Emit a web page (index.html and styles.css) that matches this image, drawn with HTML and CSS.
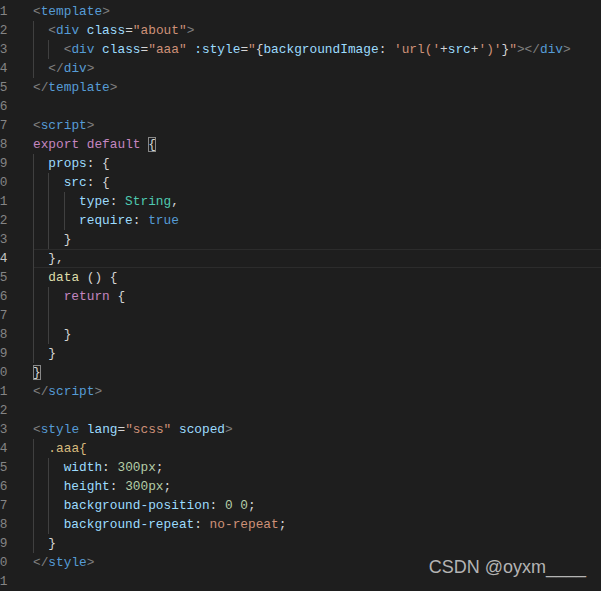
FILE: index.html
```html
<!DOCTYPE html>
<html lang="en">
<head>
  <meta charset="UTF-8" />
  <title>About.vue</title>
  <link rel="stylesheet" href="styles.css">
</head>
<body>

  <!-- editor -->
  <div class="editor">
    <div class="line"><span class="ln">1</span><div class="code"><span class="p">&lt;</span><span class="t">template</span><span class="p">&gt;</span></div></div>
    <div class="line"><span class="ln">2</span><div class="code"><span class="ind"></span><span class="p">&lt;</span><span class="t">div</span> <span class="a">class</span>=<span class="s">"about"</span><span class="p">&gt;</span></div></div>
    <div class="line"><span class="ln">3</span><div class="code"><span class="ind"></span><span class="ind"></span><span class="p">&lt;</span><span class="t">div</span> <span class="a">class</span>=<span class="s">"aaa"</span> <span class="a">:style</span>=<span class="s">"</span>{<span class="a">backgroundImage</span>: <span class="s">'url('</span>+<span class="a">src</span>+<span class="s">')'</span>}<span class="s">"</span><span class="p">&gt;&lt;/</span><span class="t">div</span><span class="p">&gt;</span></div></div>
    <div class="line"><span class="ln">4</span><div class="code"><span class="ind"></span><span class="p">&lt;/</span><span class="t">div</span><span class="p">&gt;</span></div></div>
    <div class="line"><span class="ln">5</span><div class="code"><span class="p">&lt;/</span><span class="t">template</span><span class="p">&gt;</span></div></div>
    <div class="line"><span class="ln">6</span><div class="code"></div></div>
    <div class="line"><span class="ln">7</span><div class="code"><span class="p">&lt;</span><span class="t">script</span><span class="p">&gt;</span></div></div>
    <div class="line"><span class="ln">8</span><div class="code"><span class="k">export</span> <span class="k">default</span> <span class="match">{</span></div></div>
    <div class="line"><span class="ln">9</span><div class="code"><span class="ind"></span><span class="a">props</span>: {</div></div>
    <div class="line"><span class="ln">10</span><div class="code"><span class="ind"></span><span class="ind"></span><span class="a">src</span>: {</div></div>
    <div class="line"><span class="ln">11</span><div class="code"><span class="ind"></span><span class="ind"></span><span class="ind"></span><span class="a">type</span>: <span class="c">String</span>,</div></div>
    <div class="line"><span class="ln">12</span><div class="code"><span class="ind"></span><span class="ind"></span><span class="ind"></span><span class="a">require</span>: <span class="t">true</span></div></div>
    <div class="line"><span class="ln">13</span><div class="code"><span class="ind"></span><span class="ind"></span>}</div></div>
    <div class="line active"><span class="ln">14</span><div class="code"><span class="ind"></span>},</div></div>
    <div class="line"><span class="ln">15</span><div class="code"><span class="ind"></span><span class="f">data</span> () {</div></div>
    <div class="line"><span class="ln">16</span><div class="code"><span class="ind"></span><span class="ind"></span><span class="k">return</span> {</div></div>
    <div class="line"><span class="ln">17</span><div class="code"><span class="ind"></span><span class="ind"></span></div></div>
    <div class="line"><span class="ln">18</span><div class="code"><span class="ind"></span><span class="ind"></span>}</div></div>
    <div class="line"><span class="ln">19</span><div class="code"><span class="ind"></span>}</div></div>
    <div class="line"><span class="ln">20</span><div class="code"><span class="match">}</span></div></div>
    <div class="line"><span class="ln">21</span><div class="code"><span class="p">&lt;/</span><span class="t">script</span><span class="p">&gt;</span></div></div>
    <div class="line"><span class="ln">22</span><div class="code"></div></div>
    <div class="line"><span class="ln">23</span><div class="code"><span class="p">&lt;</span><span class="t">style</span> <span class="a">lang</span>=<span class="s">"scss"</span> <span class="a">scoped</span><span class="p">&gt;</span></div></div>
    <div class="line"><span class="ln">24</span><div class="code"><span class="ind"></span><span class="sel">.aaa{</span></div></div>
    <div class="line"><span class="ln">25</span><div class="code"><span class="ind"></span><span class="ind"></span><span class="a">width</span>: <span class="n">300px</span>;</div></div>
    <div class="line"><span class="ln">26</span><div class="code"><span class="ind"></span><span class="ind"></span><span class="a">height</span>: <span class="n">300px</span>;</div></div>
    <div class="line"><span class="ln">27</span><div class="code"><span class="ind"></span><span class="ind"></span><span class="a">background-position</span>: <span class="n">0 0</span>;</div></div>
    <div class="line"><span class="ln">28</span><div class="code"><span class="ind"></span><span class="ind"></span><span class="a">background-repeat</span>: <span class="s">no-repeat</span>;</div></div>
    <div class="line"><span class="ln">29</span><div class="code"><span class="ind"></span>}</div></div>
    <div class="line"><span class="ln">30</span><div class="code"><span class="p">&lt;/</span><span class="t">style</span><span class="p">&gt;</span></div></div>
    <div class="line"><span class="ln">31</span><div class="code"></div></div>
  </div>

  <!-- watermark -->
  <div class="watermark">CSDN @oyxm____</div>

</body>
</html>
```

FILE: styles.css
```css
body {
  margin: 0;
  padding: 0;
  background: #1e1e1e;
  overflow: hidden;
  font-family: 'Liberation Mono', 'DejaVu Sans Mono', monospace;
  font-size: 12.8px;
  color: #d4d4d4;
}

/* editor */
.editor {
  display: flex;
  flex-direction: column;
  padding-top: 2px;
}

.line {
  display: flex;
  height: 19px;
  line-height: 19px;
  white-space: pre;
}

.ln {
  width: 16px;
  margin-left: -8.5px;
  margin-right: 25.5px;
  text-align: right;
  color: #858585;
  flex-shrink: 0;
}

.code {
  flex: 1;
  height: 19px;
}

.active .ln { color: #c6c6c6; }
.active .code {
  box-shadow: inset 0 1px #2c2c2c, inset 0 -1px #2c2c2c;
}

.ind {
  display: inline-block;
  vertical-align: top;
  width: 2ch;
  height: 19px;
  box-shadow: inset 1px 0 #404040;
}

.match {
  outline: 1px solid #888;
  outline-offset: -1px;
}

/* tokens */
.p { color: #808080; }
.t { color: #569cd6; }
.a { color: #9cdcfe; }
.s { color: #ce9178; }
.k { color: #c586c0; }
.c { color: #4ec9b0; }
.f { color: #dcdcaa; }
.n { color: #b5cea8; }
.sel { color: #d7ba7d; }

/* watermark */
.watermark {
  position: absolute;
  right: 15px;
  top: 557px;
  font-family: 'Liberation Sans', Arial, sans-serif;
  font-size: 18px;
  color: #b4b4b4;
}
```
